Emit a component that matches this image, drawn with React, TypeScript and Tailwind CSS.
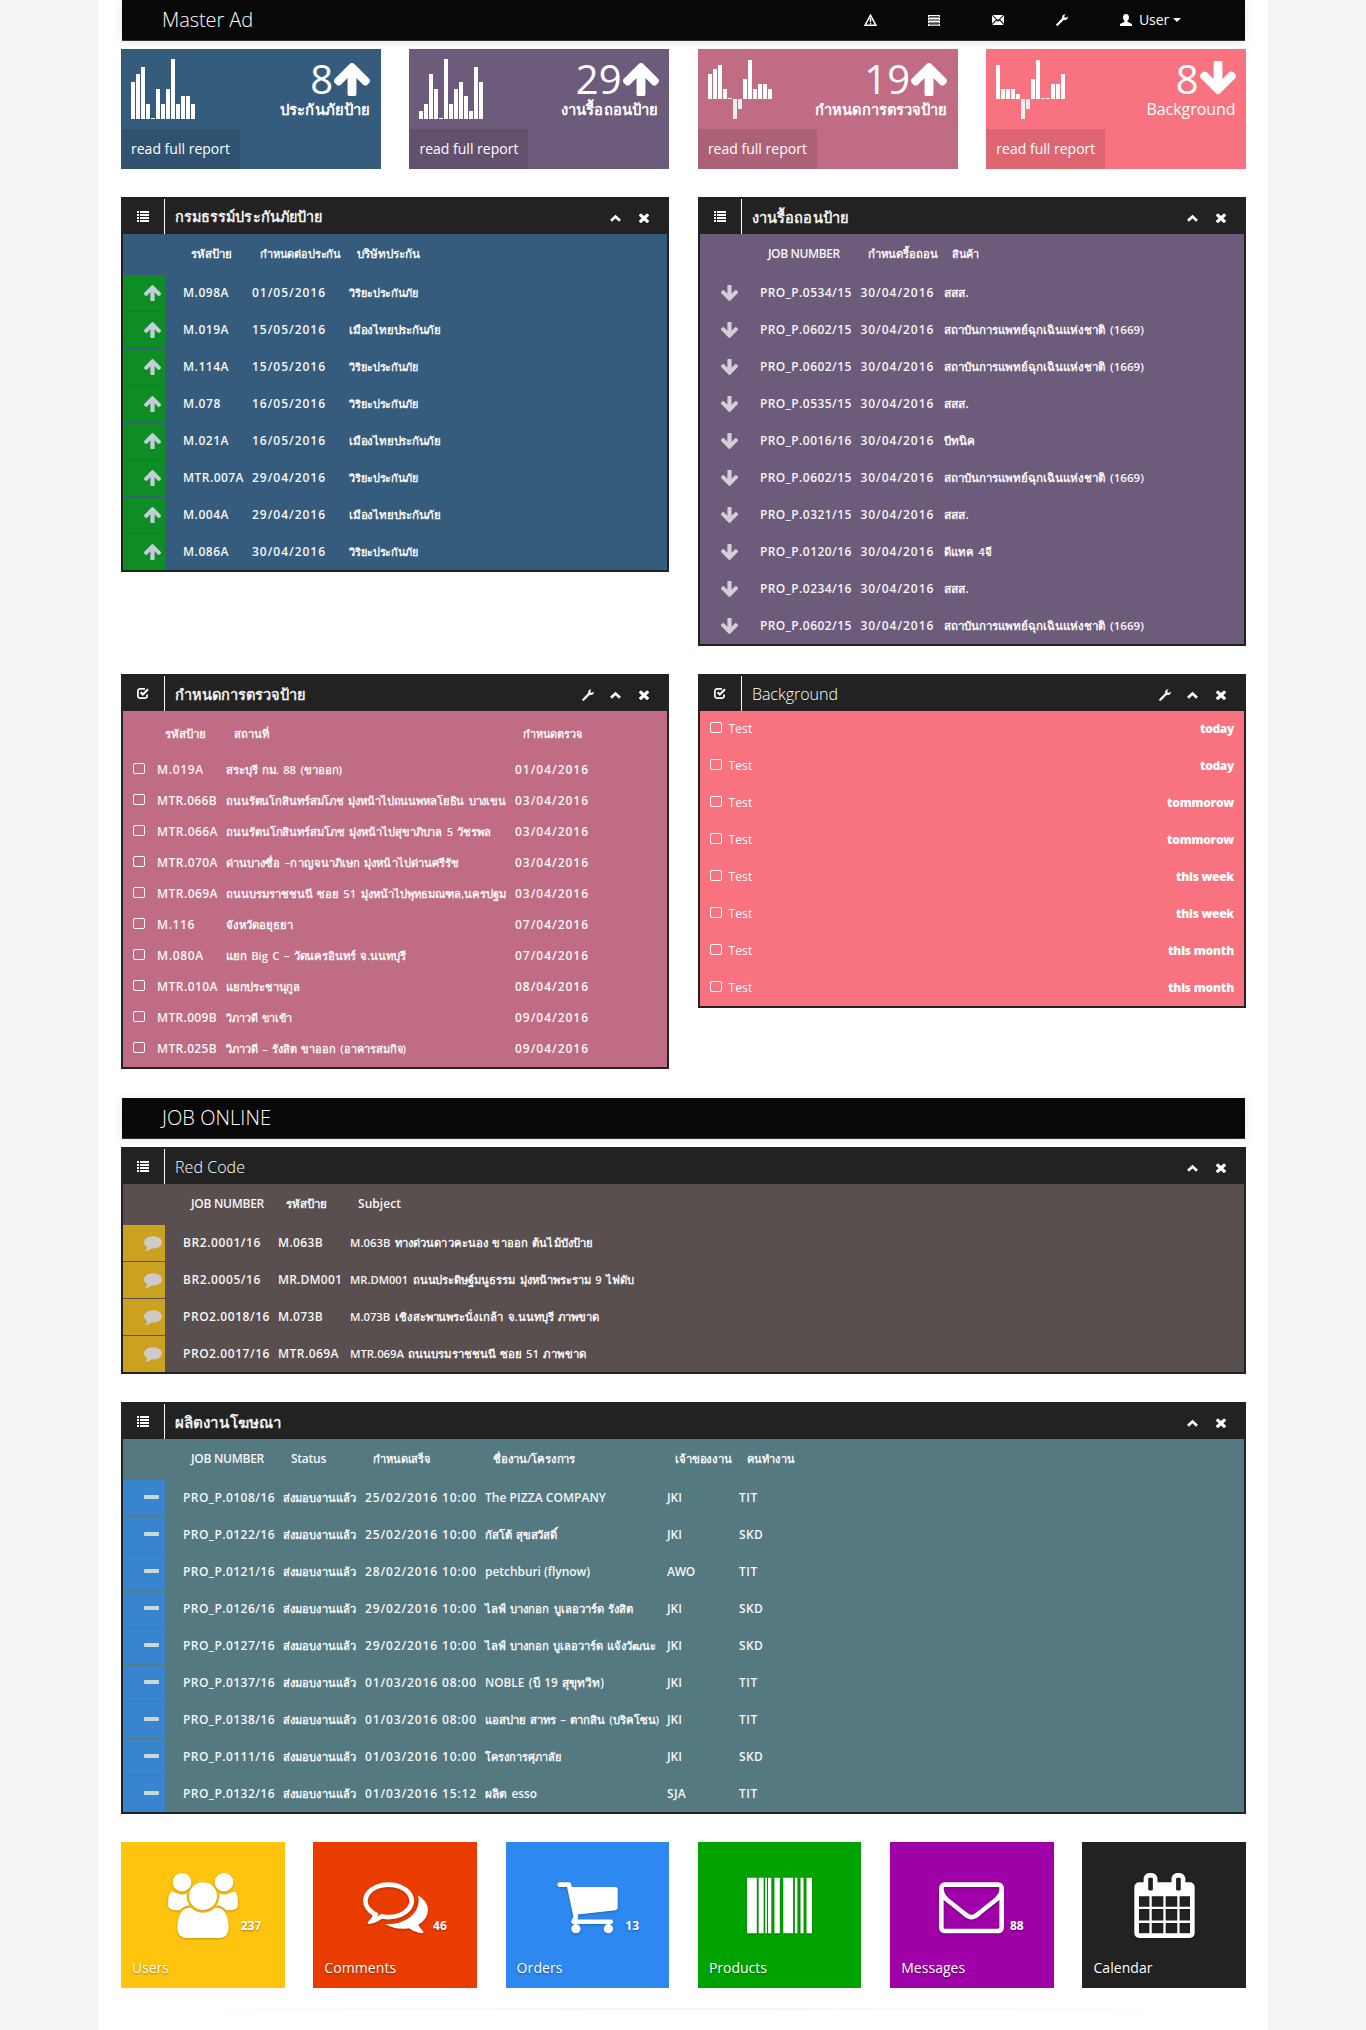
import { useLayoutEffect, useRef, type ReactNode } from "react";

/* ---------- text with a fixed set width ---------- */

function T({ t, w, className = "" }: { t: string; w?: number; className?: string }) {
  const ref = useRef<HTMLSpanElement>(null);
  useLayoutEffect(() => {
    const el = ref.current;
    if (!el || !w) return;
    el.style.letterSpacing = "0px";
    el.style.fontSize = "";
    const thai = /[\u0e00-\u0e7f]/.test(t);
    if (thai) el.style.wordSpacing = "1.5px";
    let natural = el.getBoundingClientRect().width;
    if (thai && natural > w) {
      const base = parseFloat(getComputedStyle(el).fontSize);
      el.style.fontSize = `${base * Math.max(0.9, w / natural)}px`;
      natural = el.getBoundingClientRect().width;
    }
    const Seg = (Intl as any).Segmenter;
    const count = Seg ? Array.from(new Seg("th", { granularity: "grapheme" }).segment(t)).length : t.length;
    el.style.letterSpacing = `${(w - natural) / count}px`;
  }, [t, w]);
  return (
    <span ref={ref} className={`inline-block whitespace-pre ${className}`}>
      {t}
    </span>
  );
}

/* ---------- icons ---------- */

const P = {
  up: "M1675 971q0 51-37 90l-75 75q-38 38-91 38q-54 0-90-38l-294-293v704q0 52-37.5 84.5t-90.5 32.5h-128q-53 0-90.5-32.5t-37.5-84.5v-704l-294 293q-36 38-90 38t-90-38l-75-75q-38-38-38-90q0-53 38-91l651-651q35-37 90-37q54 0 91 37l651 651q37 39 37 91z",
  comment:
    "M1792 896q0 174-120 321.5t-326 233-450 85.5q-70 0-145-8-198 175-460 242-49 14-114 22-17 2-30.5-9t-17.5-29v-1q-3-4-.5-12t2-10 4.5-9.5l6-9 7-8.5 8-9q7-8 31-34.5t34.5-38 31-39.5 32.5-51 27-59 26-76q-157-89-247.5-220t-90.5-281q0-130 71-248.5t191-204.5 286-136.5 348-50.5q244 0 450 85.5t326 233 120 321.5z",
  times:
    "M1490 1322q0 40-28 68l-136 136q-28 28-68 28t-68-28l-294-294-294 294q-28 28-68 28t-68-28l-136-136q-28-28-28-68t28-68l294-294-294-294q-28-28-28-68t28-68l136-136q28-28 68-28t68 28l294 294 294-294q28-28 68-28t68 28l136 136q28 28 28 68t-28 68l-294 294 294 294q28 28 28 68z",
  users:
    "M593 896q-162 5-265 128h-134q-82 0-138-40.5t-56-118.5q0-353 124-353 6 0 43.5 21t97.5 42.5 119 21.5q67 0 133-23-5 37-5 66 0 139 81 256zm1071 637q0 120-73 189.5t-194 69.5h-874q-121 0-194-69.5t-73-189.5q0-53 3.5-103.5t14-109 26.5-108.5 43-97.5 62-81 85.5-53.5 111.5-20q10 0 43 21.5t73 48 107 48 135 21.5 135-21.5 107-48 73-48 43-21.5q61 0 111.5 20t85.5 53.5 62 81 43 97.5 26.5 108.5 14 109 3.5 103.5zm-1024-1277q0 106-75 181t-181 75-181-75-75-181 75-181 181-75 181 75 75 181zm704 384q0 159-112.5 271.5t-271.5 112.5-271.5-112.5-112.5-271.5 112.5-271.5 271.5-112.5 271.5 112.5 112.5 271.5zm576 225q0 78-56 118.5t-138 40.5h-134q-103-123-265-128 81-117 81-256 0-29-5-66 66 23 133 23 59 0 119-21.5t97.5-42.5 43.5-21q124 0 124 353zm-128-609q0 106-75 181t-181 75-181-75-75-181 75-181 181-75 181 75 75 181z",
  comments:
    "M704 384q-153 0-286 52t-211.5 141-78.5 191q0 82 53 158t149 132l97 56-35 84q34-20 62-39l44-31 53 10q78 14 153 14 153 0 286-52t211.5-141 78.5-191-78.5-191-211.5-141-286-52zm0-128q191 0 353.5 68.5t256.5 186.5 94 257-94 257-256.5 186.5-353.5 68.5q-86 0-176-16-124 88-278 128-36 9-86 16h-3q-11 0-20.5-8t-11.5-21q-1-3-1-6.5t.5-6.5 2-6l2.5-5 3.5-5.5 4-5 4.5-5 4-4.5q5-6 23-25t26-29.5 22.5-29 25-38.5 20.5-44q-124-72-195-177t-71-224q0-139 94-257t256.5-186.5 353.5-68.5zm822 1169q10 24 20.5 44t25 38.5 22.5 29 26 29.5 23 25q1 1 4 4.5t4.5 5 4 5 3.5 5.5l2.5 5 2 6 .5 6.5-1 6.5q-3 14-13 22t-22 7q-50-7-86-16-154-40-278-128-90 16-176 16-271 0-472-132 58 4 88 4 161 0 309-45t264-129q125-92 192-212t67-254q0-77-23-152 129 71 204 178t75 230q0 120-71 224.5t-195 176.5z",
  cart: "M704 1536q0 52-38 90t-90 38-90-38-38-90 38-90 90-38 90 38 38 90zm896 0q0 52-38 90t-90 38-90-38-38-90 38-90 90-38 90 38 38 90zm128-1088v512q0 24-16.5 42.5t-40.5 21.5l-1044 122q13 60 13 70 0 16-24 64h920q26 0 45 19t19 45-19 45-45 19h-1024q-26 0-45-19t-19-45q0-11 8-31.5t16-36 21.5-40 15.5-29.5l-177-823h-204q-26 0-45-19t-19-45 19-45 45-19h256q16 0 28.5 6.5t19.5 15.5 13 24.5 8 26 5.5 29.5 4.5 26h1201q26 0 45 19t19 45z",
  barcode:
    "M0 128h270v1536h-270zM320 128h140v1536h-140zM505 128h45v1536h-45zM580 128h90v1536h-90zM755 128h150v1536h-150zM1000 128h270v1536h-270zM1320 128h70v1536h-70zM1475 128h85v1536h-85zM1640 128h152v1536h-152z",
  envelope:
    "M1664 1504v-768q-32 36-69 66-268 206-426 338-51 43-83 67t-86.5 48.5-102.5 24.5h-2q-48 0-102.5-24.5t-86.5-48.5-83-67q-158-132-426-338-37-30-69-66v768q0 13 9.5 22.5t22.5 9.5h1472q13 0 22.5-9.5t9.5-22.5zm0-1051v-24.5l-.5-13-3-12.5-5.5-9-9-7.5-14-2.5h-1472q-13 0-22.5 9.5t-9.5 22.5q0 168 147 284 193 152 401 317 6 5 35 29.5t46 37.5 44.5 31.5 50.5 27.5 43 9h2q20 0 43-9t50.5-27.5 44.5-31.5 46-37.5 35-29.5q208-165 401-317 54-43 100.5-115.5t46.5-131.5zm128-37v1088q0 66-47 113t-113 47h-1472q-66 0-113-47t-47-113v-1088q0-66 47-113t113-47h1472q66 0 113 47t47 113z",
  calendar:
    "M192 1664h288v-288h-288v288zm352 0h320v-288h-320v288zm-352-352h288v-320h-288v320zm352 0h320v-320h-320v320zm-352-384h288v-288h-288v288zm736 736h320v-288h-320v288zm-384-736h320v-288h-320v288zm768 736h288v-288h-288v288zm-384-352h320v-320h-320v320zm-352-864v-288q0-13-9.5-22.5t-22.5-9.5h-64q-13 0-22.5 9.5t-9.5 22.5v288q0 13 9.5 22.5t22.5 9.5h64q13 0 22.5-9.5t9.5-22.5zm736 864h288v-320h-288v320zm-384-384h320v-288h-320v288zm384 0h288v-288h-288v288zm32-480v-288q0-13-9.5-22.5t-22.5-9.5h-64q-13 0-22.5 9.5t-9.5 22.5v288q0 13 9.5 22.5t22.5 9.5h64q13 0 22.5-9.5t9.5-22.5zm384-64v1280q0 52-38 90t-90 38h-1408q-52 0-90-38t-38-90v-1280q0-52 38-90t90-38h128v-96q0-66 47-113t113-47h64q66 0 113 47t47 113v96h384v-96q0-66 47-113t113-47h64q66 0 113 47t47 113v96h128q52 0 90 38t38 90z",
};

function Svg({ box, d, className }: { box: string; d: string; className: string }) {
  return (
    <svg viewBox={box} className={`block shrink-0 fill-current ${className}`} preserveAspectRatio="none">
      <path d={d} />
    </svg>
  );
}

const Wrench = () => (
  <svg viewBox="0 0 12 12" className="block h-3 w-3 shrink-0">
    <path d="M1.3 10.7 7.6 4.4" stroke="#fff" strokeWidth="2.3" strokeLinecap="round" />
    <path d="M9.6.3 8.2 1.9l.4 1.5 1.5.4L11.8 2.4c.3 1.700-.5 3.200-2 3.600-1.200.3-2.600-.2-3.300-1.200C5.600 3.300 6.100.3 9.600.3z" fill="#fff" />
  </svg>
);
const ListIcon = () => (
  <svg viewBox="0 0 12 11" className="block h-[11px] w-3 shrink-0 fill-white">
    <path d="M0 0h2v2H0zM3 0h9v2H3zM0 3h2v2H0zM3 3h9v2H3zM0 6h2v2H0zM3 6h9v2H3zM0 9h2v2H0zM3 9h9v2H3z" />
  </svg>
);
const CheckIcon = () => (
  <svg viewBox="0 0 12 11" className="block h-[11px] w-3 shrink-0" fill="none" stroke="#fff">
    <path d="M8 .9H3A2.100 2.100 0 0 0 .9 3v5A2.100 2.100 0 0 0 3 10.100h5A2.100 2.100 0 0 0 10.100 8V6.500" strokeWidth="1.700" />
    <path d="M3.600 4.300l2.200 2.200L11 1.300" strokeWidth="2" />
  </svg>
);
const UpIcon = () => (
  <svg viewBox="0 0 11 8" className="block h-2 w-[11px]" fill="none" stroke="#fff">
    <path d="M1 6.800l4.500-4.300L10 6.800" strokeWidth="2.600" />
  </svg>
);
const Box = () => <span className="mb-[3px] block h-[11px] w-3 shrink-0 rounded-[2px] border border-white" />;

/* ---------- header bar ---------- */

function Bar({ children }: { children: ReactNode }) {
  return (
    <div className="mx-px flex h-[41px] items-center border-b border-[#333] bg-[#080808] text-[#eee] shadow-[0_1px_10px_rgba(0,0,0,0.1)]">
      {children}
    </div>
  );
}

function NavIcons() {
  return (
    <div className="ml-auto flex h-full items-center text-white">
      <span className="w-16">
        <svg viewBox="0 0 13 12" className="block h-3 w-[13px]" fill="none" stroke="#fff">
          <path d="M6.500 1.200 11.800 11.200H1.200z" strokeWidth="1.500" />
          <path d="M6.500 4v4M6.500 8.800v1.400" strokeWidth="1.500" />
        </svg>
      </span>
      <span className="w-16">
        <svg viewBox="0 0 12 11" className="block h-[11px] w-3 fill-white">
          <path
            fillRule="evenodd"
            d="M0 0h12v2.400H0zM1 1v.7h10V1zM0 3h12v2.400H0zM0 6h12v2.300H0zM1 4v.6h10V4zM1 6.900v.6h10v-.6zM0 8.900h12V11H0zM1 9.600v.6h10v-.6z"
          />
        </svg>
      </span>
      <span className="w-16">
        <svg viewBox="0 0 12 10" className="block h-2.5 w-3 fill-white">
          <path d="M.7 0h10.600L6 5zM0 .6 3.900 4.600 0 8.700zM12 .6v8.100L8.100 4.600zM4.500 5.400 6 6.700l1.500-1.300L11.700 10H.3z" />
        </svg>
      </span>
      <span className="w-16">
        <Wrench />
      </span>
      <svg viewBox="0 0 12 12" className="block h-3 w-3 fill-white">
        <path d="M6 0c1.900 0 3 1.300 3 3.200 0 1.600-.6 2.900-1.500 3.500v1.100L12 10v2H0v-2l4.500-2.200V6.700C3.600 6.100 3 4.800 3 3.200 3 1.300 4.100 0 6 0z" />
      </svg>
      <T t="User" w={30} className="ml-[7px] text-sm leading-5" />
      <span className="ml-1 mr-[64px] border-x-4 border-t-4 border-x-transparent border-t-white" />
    </div>
  );
}

/* ---------- stat cards ---------- */

type Stat = { bg: string; n: string; down?: boolean; label: string; w: number; base: number; bars: number[] };
const stats: Stat[] = [
  { bg: "bg-[#355c7d]", n: "8", label: "ประกันภัยป้าย", w: 90, base: 60, bars: [37, 45, 52, 15, 1, 30, 15, 30, 60, 15, 23, 23, 15] },
  { bg: "bg-[#6c5b7b]", n: "29", label: "งานรื้อถอนป้าย", w: 98, base: 60, bars: [8, 15, 45, 30, 1, 60, 15, 30, 37, 23, 8, 52, 37] },
  { bg: "bg-[#c06c84]", n: "19", label: "กำหนดการตรวจป้าย", w: 132, base: 40, bars: [25, 30, 34, 10, 1, -20, -10, 20, 39, 10, 15, 15, 10] },
  { bg: "bg-[#f8727f]", n: "8", down: true, label: "Background", w: 89, base: 40, bars: [34, 10, 10, 10, 5, -20, -10, 20, 39, 1, 1, 15, 15, 25] },
];

function StatCard({ s }: { s: Stat }) {
  return (
    <div className={`flex h-[120px] flex-col justify-between text-white ${s.bg}`}>
      <div className="flex justify-between pl-[10px] pr-[10.500px] pt-[10px]">
        <svg width="70" height="60" className="block">
          {s.bars.map((b, i) => (
            <rect key={i} x={i * 5} width="4" y={b > 0 ? s.base - b : s.base} height={Math.abs(b)} fill={b > 0 ? "#fff" : "#eee"} />
          ))}
        </svg>
        <div className="flex flex-col items-end">
          <div className="flex h-10 items-center">
            <span className="text-[40px] leading-10">{s.n}</span>
            <Svg box="118 192 1557 1439" d={P.up} className={`ml-px h-[33px] w-9 ${s.down ? "-mt-1 rotate-180" : ""}`} />
          </div>
          <T t={s.label} w={s.w} className={`text-base leading-5 ${s.down ? "" : "font-semibold"}`} />
        </div>
      </div>
      <div className="flex h-10 w-[119px] items-center bg-black/10 pl-[10px] text-sm text-white">
        <T t="read full report" w={99} />
      </div>
    </div>
  );
}

/* ---------- panels ---------- */

function Panel({
  title,
  w,
  thai,
  check,
  bg,
  children,
}: {
  title: string;
  w: number;
  thai?: boolean;
  check?: boolean;
  bg: string;
  children: ReactNode;
}) {
  return (
    <section className="self-start border-2 border-[#222] bg-[#222]">
      <header className="flex h-[35px] items-center">
        <span className="flex h-full w-[42px] items-center border-r border-white pl-[14px]">{check ? <CheckIcon /> : <ListIcon />}</span>
        <T t={title} w={w} className={`ml-[10px] text-base leading-6 ${thai ? "font-semibold text-[#eee]" : "font-light text-white"}`} />
        <span className="ml-auto flex items-center pr-[18px] pt-0.5">
          {check && (
            <span className="mr-4">
              <Wrench />
            </span>
          )}
          <UpIcon />
          <Svg box="302 302 1188 1252" d={P.times} className="ml-[18px] h-2.5 w-2.5 text-white" />
        </span>
      </header>
      <div className={`text-xs font-semibold text-[#f6f6f6] ${bg}`}>{children}</div>
    </section>
  );
}

type C = [string, number];

function Table({ cols, head, rows, cell, icon }: { cols: string; head: C[]; rows: C[][]; cell: string; icon: ReactNode }) {
  return (
    <div className="flex flex-col">
      <div className={`grid h-[41px] items-center pb-0.5 pl-[68px] ${cols}`}>
        {head.map(([t, w]) => (
          <div key={t}>
            <T t={t} w={w} />
          </div>
        ))}
      </div>
      <div className="flex flex-col gap-px">
        {rows.map((r, i) => (
          <div key={i} className="flex h-9">
            <div className={`flex w-[42px] items-center pl-[21px] text-white opacity-70 ${cell}`}>{icon}</div>
            <div className={`ml-[18px] grid grow items-center ${cols}`}>
              {r.map(([t, w], j) => (
                <div key={j}>
                  <T t={t} w={w} />
                </div>
              ))}
            </div>
          </div>
        ))}
      </div>
    </div>
  );
}

const viriya: C = ["วิริยะประกันภัย", 69];
const muang: C = ["เมืองไทยประกันภัย", 92];
const d = (s: string): C => [s, 74];
const insurance: C[][] = [
  [["M.098A", 46], d("01/05/2016"), viriya],
  [["M.019A", 46], d("15/05/2016"), muang],
  [["M.114A", 46], d("15/05/2016"), viriya],
  [["M.078", 38], d("16/05/2016"), viriya],
  [["M.021A", 46], d("16/05/2016"), muang],
  [["MTR.007A", 61], d("29/04/2016"), viriya],
  [["M.004A", 46], d("29/04/2016"), muang],
  [["M.086A", 46], d("30/04/2016"), viriya],
];

const sss: C = ["สสส.", 25];
const ems: C = ["สถาบันการแพทย์ฉุกเฉินแห่งชาติ (1669)", 200];
const removal: C[][] = (
  [
    ["0534/15", sss],
    ["0602/15", ems],
    ["0602/15", ems],
    ["0535/15", sss],
    ["0016/16", ["บีทนิค", 31]],
    ["0602/15", ems],
    ["0321/15", sss],
    ["0120/16", ["ดีแทค 4จี", 48]],
    ["0234/16", sss],
    ["0602/15", ems],
  ] as [string, C][]
).map(([n, c]) => [["PRO_P." + n, 92], d("30/04/2016"), c]);

const inspections: C[][] = [
  [["M.019A", 47], ["สระบุรี กม. 88 (ขาออก)", 116], d("01/04/2016")],
  [["MTR.066B", 60], ["ถนนรัตนโกสินทร์สมโภช มุ่งหน้าไปถนนพหลโยธิน บางเขน", 280], d("03/04/2016")],
  [["MTR.066A", 61], ["ถนนรัตนโกสินทร์สมโภช มุ่งหน้าไปสุขาภิบาล 5 วัชรพล", 265], d("03/04/2016")],
  [["MTR.070A", 61], ["ด่านบางซื่อ –กาญจนาภิเษก มุ่งหน้าไปด่านศรีรัช", 233], d("03/04/2016")],
  [["MTR.069A", 61], ["ถนนบรมราชชนนี ซอย 51 มุ่งหน้าไปพุทธมณฑล,นครปฐม", 280], d("03/04/2016")],
  [["M.116", 38], ["จังหวัดอยุธยา", 67], d("07/04/2016")],
  [["M.080A", 47], ["แยก Big C – วัดนครอินทร์ จ.นนทบุรี", 180], d("07/04/2016")],
  [["MTR.010A", 61], ["แยกประชานุกูล", 74], d("08/04/2016")],
  [["MTR.009B", 60], ["วิภาวดี ขาเข้า", 66], d("09/04/2016")],
  [["MTR.025B", 60], ["วิภาวดี – รังสิต ขาออก (อาคารสมกิจ)", 180], d("09/04/2016")],
];

const todos: C[] = [
  ["today", 34],
  ["today", 34],
  ["tommorow", 67],
  ["tommorow", 67],
  ["this week", 58],
  ["this week", 58],
  ["this month", 66],
  ["this month", 66],
];

const redCode: C[][] = [
  [["BR2.0001/16", 78], ["M.063B", 45], ["M.063B ทางด่วนดาวคะนอง ขาออก ต้นไม้บังป้าย", 243]],
  [["BR2.0005/16", 78], ["MR.DM001", 64], ["MR.DM001 ถนนประดิษฐ์มนูธรรม มุ่งหน้าพระราม 9 ไฟดับ", 284]],
  [["PRO2.0018/16", 87], ["M.073B", 45], ["M.073B เชิงสะพานพระนั่งเกล้า จ.นนทบุรี ภาพขาด", 249]],
  [["PRO2.0017/16", 87], ["MTR.069A", 61], ["MTR.069A ถนนบรมราชชนนี ซอย 51 ภาพขาด", 236]],
];

const ow: Record<string, number> = { JKI: 15, AWO: 28, SJA: 19, TIT: 19, SKD: 24 };
const production: C[][] = (
  [
    ["0108", "25/02/2016 10:00", ["The PIZZA COMPANY", 121], "JKI", "TIT"],
    ["0122", "25/02/2016 10:00", ["กัสโต้ สุขสวัสดิ์", 72], "JKI", "SKD"],
    ["0121", "28/02/2016 10:00", ["petchburi (flynow)", 105], "AWO", "TIT"],
    ["0126", "29/02/2016 10:00", ["ไลฟ์ บางกอก บูเลอวาร์ด รังสิต", 148], "JKI", "SKD"],
    ["0127", "29/02/2016 10:00", ["ไลฟ์ บางกอก บูเลอวาร์ด แจ้งวัฒนะ", 171], "JKI", "SKD"],
    ["0137", "01/03/2016 08:00", ["NOBLE (บี 19 สุขุทวิท)", 119], "JKI", "TIT"],
    ["0138", "01/03/2016 08:00", ["แอสปาย สาทร – ตากสิน (บริคโซน)", 174], "JKI", "TIT"],
    ["0111", "01/03/2016 10:00", ["โครงการศุภาลัย", 76], "JKI", "SKD"],
    ["0132", "01/03/2016 15:12", ["ผลิต esso", 52], "SJA", "TIT"],
  ] as [string, string, C, string, string][]
).map(([n, dt, c, a, b]) => [["PRO_P." + n + "/16", 92], ["ส่งมอบงานแล้ว", 73], [dt, 112], c, [a, ow[a]], [b, ow[b]]]);

/* ---------- tiles ---------- */

const tiles: { bg: string; d: string; box?: string; label: string; w: number; n?: string }[] = [
  { bg: "bg-[#ffc40d]", d: P.users, box: "0 0 1920 1792", label: "Users", w: 37, n: "237" },
  { bg: "bg-[#eb3c00]", d: P.comments, label: "Comments", w: 72, n: "46" },
  { bg: "bg-[#2d89ef]", d: P.cart, label: "Orders", w: 46, n: "13" },
  { bg: "bg-[#00a300]", d: P.barcode, label: "Products", w: 58 },
  { bg: "bg-[#9f00a7]", d: P.envelope, label: "Messages", w: 64, n: "88" },
  { bg: "bg-[#222]", d: P.calendar, label: "Calendar", w: 59 },
];

export default function App() {
  const arrow = <Svg box="118 192 1557 1439" d={P.up} className="h-4 w-[17px]" />;
  const arrowDown = <Svg box="118 192 1557 1439" d={P.up} className="h-4 w-[17px] rotate-180" />;
  return (
    <div className="h-[2030px] overflow-hidden bg-[#f5f5f5] font-['Open_Sans','Noto_Sans',sans-serif]">
      <main className="mx-auto h-full w-[1170px] bg-white px-[23px]">
        <div className="w-[1125px]">
          <Bar>
            <T t="Master Ad" w={91} className="ml-10 text-xl font-light text-white" />
            <NavIcons />
          </Bar>

          <div className="mt-2 grid grid-cols-4 gap-x-[28.800px]">
            {stats.map((s, i) => (
              <StatCard key={i} s={s} />
            ))}
          </div>

          <div className="mt-7 grid grid-cols-2 gap-x-[28.800px] gap-y-7">
            <Panel title="กรมธรรม์ประกันภัยป้าย" w={147} thai bg="bg-[#355c7d]">
              <Table
                cols="grid-cols-[69px_97px_1fr]"
                cell="bg-[#00a300]"
                icon={arrow}
                head={[["รหัสป้าย", 41], ["กำหนดต่อประกัน", 81], ["บริษัทประกัน", 63]]}
                rows={insurance}
              />
            </Panel>
            <Panel title="งานรื้อถอนป้าย" w={97} thai bg="bg-[#6c5b7b]">
              <Table
                cols="grid-cols-[100.500px_83.500px_1fr]"
                cell=""
                icon={arrowDown}
                head={[["JOB NUMBER", 72], ["กำหนดรื้อถอน", 69], ["สินค้า", 27]]}
                rows={removal}
              />
            </Panel>
            <Panel title="กำหนดการตรวจป้าย" w={131} thai check bg="bg-[#c06c84]">
              <div className="pb-[3px]">
                <div className="grid h-[43px] grid-cols-[69px_289px_1fr] items-center pl-[42px] pt-[3px]">
                  <div><T t="รหัสป้าย" w={41} /></div>
                  <div><T t="สถานที่" w={35} /></div>
                  <div><T t="กำหนดตรวจ" w={59} /></div>
                </div>
                {inspections.map((r, i) => (
                  <div key={i} className="flex h-[31px] items-center pl-[10px]">
                    <Box />
                    <div className="ml-3 grid grow grid-cols-[69px_289px_1fr] items-center">
                      {r.map(([t, w], j) => (
                        <div key={j}><T t={t} w={w} /></div>
                      ))}
                    </div>
                  </div>
                ))}
              </div>
            </Panel>
            <Panel title="Background" w={86} check bg="bg-[#f8727f]">
              <div className="h-[295px] text-white">
                {todos.map(([t, w], i) => (
                  <div key={i} className="flex h-[37px] items-center pb-px pl-[10px] pr-[10px]">
                    <Box />
                    <T t="Test" w={24} className="ml-[6.500px] font-normal" />
                    <T t={t} w={w} className="ml-auto font-extrabold" />
                  </div>
                ))}
              </div>
            </Panel>
          </div>

          <div className="mt-[29px]">
            <Bar>
              <T t="JOB ONLINE" w={109} className="ml-10 text-xl font-light text-white" />
            </Bar>
          </div>

          <div className="mt-2 flex flex-col gap-7 [&>section]:w-full">
            <Panel title="Red Code" w={70} bg="bg-[#594f4f]">
              <Table
                cols="grid-cols-[95px_72px_1fr]"
                cell="bg-[#ffc40d]"
                icon={<Svg box="0 128 1792 1664" d={P.comment} className="h-4 w-[18px]" />}
                head={[["JOB NUMBER", 73], ["รหัสป้าย", 41], ["Subject", 43]]}
                rows={redCode}
              />
            </Panel>
            <Panel title="ผลิตงานโฆษณา" w={107} thai bg="bg-[#547980]">
              <Table
                cols="grid-cols-[100px_82px_120px_182px_72px_1fr]"
                cell="bg-[#2d89ef]"
                icon={<span className="mb-0.5 h-1 w-[15px] rounded-[1px] bg-white" />}
                head={[["JOB NUMBER", 73], ["Status", 35], ["กำหนดเสร็จ", 57], ["ชื่องาน/โครงการ", 82], ["เจ้าของงาน", 57], ["คนทำงาน", 48]]}
                rows={production}
              />
            </Panel>
          </div>

          <div className="mt-7 grid grid-cols-6 gap-x-[28.800px]">
            {tiles.map((t) => (
              <div
                key={t.label}
                className={`relative flex h-[146px] flex-col items-center justify-between pt-[31px] text-white [text-shadow:0_1px_2px_rgba(0,0,0,0.4)] ${t.bg}`}
              >
                <Svg
                  box={t.box ?? "0 0 1792 1792"}
                  d={t.d}
                  className={`h-[65px] drop-shadow-[0_1px_1px_rgba(0,0,0,0.25)] ${t.box ? "w-[70px]" : "w-[65px]"}`}
                />
                <T t={t.label} w={t.w} className="mb-[9px] ml-[11px] self-start text-sm leading-[22px]" />
                {t.n && <span className="absolute left-[calc(50%+38px)] top-[75px] text-xs font-bold leading-[18px]">{t.n}</span>}
              </div>
            ))}
          </div>
          <div className="mt-5 h-0.5 bg-linear-to-r from-transparent via-[#f3f3f3] to-transparent" />
        </div>
      </main>
    </div>
  );
}
